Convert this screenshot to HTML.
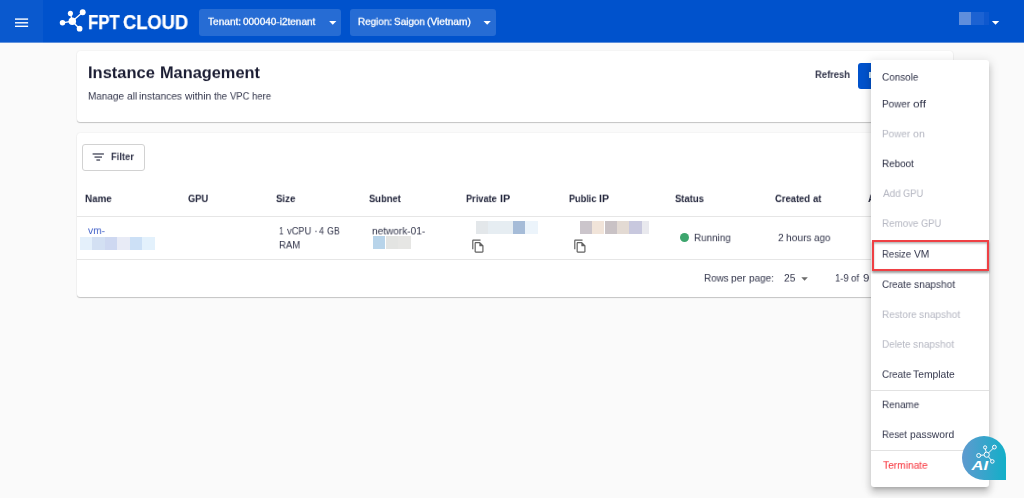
<!DOCTYPE html>
<html><head><meta charset="utf-8"><title>Instance Management</title>
<style>
*{box-sizing:border-box;margin:0;padding:0}
html,body{width:1024px;height:498px;overflow:hidden;background:#fafafa;font-family:"Liberation Sans", sans-serif}
.p{position:absolute}
.t{position:absolute;white-space:nowrap;line-height:1;transform-origin:0 0;will-change:transform}
.hdr{position:absolute;left:0;top:0;width:1024px;height:43px;background:linear-gradient(#0052cc 42px,#5d8fdc 42px)}
.ham{position:absolute;left:0;top:0;width:43px;height:43px;background:linear-gradient(#0a59ce 42px,#6394de 42px)}
.ham i{position:absolute;left:15px;width:13px;height:1.6px;background:#fff}
.sel{position:absolute;top:9.4px;height:26.6px;background:#266cd4;border-radius:3px}
.car{position:absolute;width:0;height:0;border-left:3.4px solid transparent;border-right:3.4px solid transparent;border-top:3.6px solid #fff}
.card{position:absolute;background:#fff;border-radius:3px;box-shadow:0 1px 1px rgba(0,0,0,.2),0 0 1.5px rgba(0,0,0,.1)}
.menu{position:absolute;left:871.4px;top:59.8px;width:117.2px;height:427px;background:#fff;border-radius:3px;box-shadow:0 3.6px 3.6px -2.2px rgba(0,0,0,.17),0 5.8px 7.3px .7px rgba(0,0,0,.12),0 2.2px 10px 1.5px rgba(0,0,0,.1)}
.ln{position:absolute;height:1px;background:#e6e6e6}
</style></head><body>
<div class="hdr">
<div class="ham"></div>
<svg class="p" style="left:0;top:0" width="43" height="43" viewBox="0 0 43 43"><g fill="#fff"><rect x="15" y="18.4" width="13.1" height="1.4"/><rect x="15" y="22.1" width="13.1" height="1.4"/><rect x="15" y="25.6" width="13.1" height="1.4"/></g></svg>
<svg class="p" style="left:56px;top:6px" width="36" height="30" viewBox="56 6 36 30">
<g stroke="#fff" stroke-width="1.3" stroke-linecap="round"><line x1="62.5" y1="22.8" x2="72.3" y2="21.2"/><line x1="72.3" y1="21.2" x2="70.4" y2="13.4"/><line x1="72.3" y1="21.2" x2="82.7" y2="12.3"/><line x1="72.3" y1="21.2" x2="79.6" y2="28.7"/></g>
<g fill="#fff"><circle cx="62.5" cy="22.8" r="2.75"/><circle cx="72.3" cy="21.2" r="3.75"/><circle cx="70.4" cy="13.4" r="2.55"/><circle cx="82.7" cy="12.3" r="2.95"/><circle cx="79.6" cy="28.7" r="2.85"/></g>
</svg>
<div class="sel" style="left:199px;width:142px"></div>
<div class="sel" style="left:350px;width:145.8px"></div>
<div class="p" style="left:958.6px;top:12px;width:12.3px;height:12.8px;background:#5f8edc"></div>
<div class="p" style="left:970.9px;top:12px;width:13.3px;height:12.8px;background:#1c62d2"></div>
<div class="p" style="left:984.2px;top:12px;width:4.5px;height:12.8px;background:#0e58ce"></div>

</div>
<div class="card" style="left:77px;top:51px;width:876px;height:70.6px"></div>
<div class="p" style="left:858px;top:62.6px;width:40px;height:26.3px;background:#0052cc;border-radius:3px"></div>
<div class="p" style="left:869.4px;top:71.6px;width:2px;height:6px;background:#cfe6f5"></div>
<div class="card" style="left:77px;top:133px;width:876px;height:164.2px"></div>
<div class="p" style="left:82.4px;top:144.2px;width:62.3px;height:26.5px;border:1px solid #d2d2d2;border-radius:3px"></div>
<svg class="p" style="left:90px;top:150px" width="16" height="14" viewBox="90 150 16 14"><g fill="#3c3f52"><rect x="92.6" y="153.35" width="11.3" height="1.25"/><rect x="94.5" y="156.45" width="7.5" height="1.25"/><rect x="96.4" y="159.4" width="3.7" height="1.25"/></g></svg>
<div class="ln" style="left:77px;top:216px;width:876px"></div>
<div class="ln" style="left:77px;top:259px;width:876px"></div>
<div class="p" style="left:79.8px;top:237.1px;width:12.50px;height:12.50px;background:#e4f0fb"></div>
<div class="p" style="left:92.3px;top:237.1px;width:12.30px;height:12.50px;background:#d3e0f3"></div>
<div class="p" style="left:104.6px;top:237.1px;width:12.60px;height:12.50px;background:#ced8f1"></div>
<div class="p" style="left:117.2px;top:237.1px;width:12.80px;height:12.50px;background:#e8ebf6"></div>
<div class="p" style="left:130px;top:237.1px;width:12.00px;height:12.50px;background:#cce0f6"></div>
<div class="p" style="left:142px;top:237.1px;width:13.00px;height:12.50px;background:#e3f1fc"></div>
<div class="p" style="left:373.1px;top:236.3px;width:12.40px;height:12.50px;background:#b8d4ea"></div>
<div class="p" style="left:385.5px;top:236.3px;width:12.70px;height:12.50px;background:#e3e4e2"></div>
<div class="p" style="left:398.2px;top:236.3px;width:12.80px;height:12.50px;background:#e6e6e4"></div>
<div class="p" style="left:476px;top:221.1px;width:12.30px;height:12.70px;background:#e3e7ea"></div>
<div class="p" style="left:488.3px;top:221.1px;width:24.80px;height:12.70px;background:#e6edf2"></div>
<div class="p" style="left:513.1px;top:221.1px;width:12.30px;height:12.70px;background:#a6bcd8"></div>
<div class="p" style="left:525.4px;top:221.1px;width:12.70px;height:12.70px;background:#ecf4fb"></div>
<div class="p" style="left:579.5px;top:221.1px;width:12.30px;height:12.70px;background:#cbc5cb"></div>
<div class="p" style="left:591.8px;top:221.1px;width:12.70px;height:12.70px;background:#f1e4d9"></div>
<div class="p" style="left:604.5px;top:221.1px;width:12.30px;height:12.70px;background:#c9c2c5"></div>
<div class="p" style="left:616.8px;top:221.1px;width:12.30px;height:12.70px;background:#e3dad3"></div>
<div class="p" style="left:629.1px;top:221.1px;width:12.50px;height:12.70px;background:#c8c8de"></div>
<div class="p" style="left:641.6px;top:221.1px;width:7.40px;height:12.70px;background:#e9e9ee"></div>
<svg class="p" style="left:471.2px;top:239.1px" width="14.3" height="14.3" viewBox="0 0 24 24"><path fill="#626262" d="M16 1H4c-1.1 0-2 .9-2 2v14h2V3h12V1zm-1 4H8c-1.1 0-1.99.9-1.99 2L6 21c0 1.1.89 2 1.99 2H19c1.1 0 2-.9 2-2V11l-6-6zM8 21V7h6v5h5v9H8z"/></svg>
<svg class="p" style="left:573.3px;top:239.1px" width="14.3" height="14.3" viewBox="0 0 24 24"><path fill="#626262" d="M16 1H4c-1.1 0-2 .9-2 2v14h2V3h12V1zm-1 4H8c-1.1 0-1.99.9-1.99 2L6 21c0 1.1.89 2 1.99 2H19c1.1 0 2-.9 2-2V11l-6-6zM8 21V7h6v5h5v9H8z"/></svg>
<div class="p" style="left:680px;top:233px;width:9.2px;height:9.2px;border-radius:50%;background:#3da56d"></div>

<svg class="p" style="left:0;top:0" width="1024" height="300" viewBox="0 0 1024 300"><g fill="#fff"><polygon points="329.1,20.9 336.4,20.9 332.75,24.8"/><polygon points="483.5,20.9 490.8,20.9 487.15,24.8"/><polygon points="991.9,20.9 999.2,20.9 995.55,24.8"/></g><polygon fill="#6b6b6b" points="801.3,277.2 807.8,277.2 804.55,280.7"/></svg>
<div><span class="t" style="left:88.44px;top:13.00px;font-size:19.6px;font-weight:bold;color:#fff;transform:translateY(0.00px) scale(0.8559,1.0000);-webkit-text-stroke:.25px #fff;">FPT</span> <span class="t" style="left:123.11px;top:13.00px;font-size:19.6px;font-weight:bold;color:#fff;transform:translateY(0.00px) scale(0.9360,1.0000);-webkit-text-stroke:.25px #fff;">CLOUD</span></div>
<div><span class="t" style="left:208.12px;top:17.00px;font-size:10.0px;color:#fff;transform:translateY(0.80px) scale(1.0086,0.9000);-webkit-text-stroke:.3px #fff;">Tenant:</span> <span class="t" style="left:243.15px;top:17.00px;font-size:10.0px;color:#fff;transform:translateY(0.80px) scale(0.9983,0.9000);-webkit-text-stroke:.3px #fff;">000040-i2tenant</span></div>
<div><span class="t" style="left:357.63px;top:17.00px;font-size:10.0px;color:#fff;transform:translateY(0.80px) scale(0.9857,0.9000);-webkit-text-stroke:.3px #fff;">Region:</span> <span class="t" style="left:393.55px;top:17.00px;font-size:10.0px;color:#fff;transform:translateY(0.80px) scale(0.9909,0.9000);-webkit-text-stroke:.3px #fff;">Saigon</span> <span class="t" style="left:426.69px;top:17.00px;font-size:10.0px;color:#fff;transform:translateY(0.80px) scale(1.0154,0.9000);-webkit-text-stroke:.3px #fff;">(Vietnam)</span></div>
<div><span class="t" style="left:87.56px;top:64.00px;font-size:16.2px;font-weight:bold;color:#1b1d33;transform:translateY(0.45px) scale(1.0172,0.9750);">Instance</span> <span class="t" style="left:159.56px;top:64.00px;font-size:16.2px;font-weight:bold;color:#1b1d33;transform:translateY(0.45px) scale(1.0100,0.9750);">Management</span></div>
<div><span class="t" style="left:88.05px;top:92.00px;font-size:10.3px;color:#2f3248;transform:translateY(0.10px) scale(0.9659,0.9313);">Manage</span> <span class="t" style="left:126.51px;top:92.00px;font-size:10.3px;color:#2f3248;transform:translateY(0.10px) scale(0.9808,0.9313);">all</span> <span class="t" style="left:139.16px;top:92.00px;font-size:10.3px;color:#2f3248;transform:translateY(0.10px) scale(0.9864,0.9313);">instances</span> <span class="t" style="left:184.90px;top:92.00px;font-size:10.3px;color:#2f3248;transform:translateY(0.10px) scale(0.9990,0.9313);">within</span> <span class="t" style="left:214.09px;top:92.00px;font-size:10.3px;color:#2f3248;transform:translateY(0.10px) scale(0.9091,0.9313);">the</span> <span class="t" style="left:229.89px;top:92.00px;font-size:10.3px;color:#2f3248;transform:translateY(0.10px) scale(0.9139,0.9313);">VPC</span> <span class="t" style="left:251.81px;top:92.00px;font-size:10.3px;color:#2f3248;transform:translateY(0.10px) scale(0.9187,0.9313);">here</span></div>
<div><span class="t" style="left:815.21px;top:70.00px;font-size:10.3px;font-weight:bold;color:#2f3248;transform:translateY(0.55px) scale(0.9135,0.9313);">Refresh</span></div>
<div><span class="t" style="left:110.52px;top:152.00px;font-size:10.3px;font-weight:bold;color:#2f3248;transform:translateY(0.65px) scale(0.9072,0.9313);">Filter</span></div>
<div><span class="t" style="left:84.99px;top:194.00px;font-size:10.3px;font-weight:bold;color:#23263c;transform:translateY(0.65px) scale(0.9526,0.9313);">Name</span></div>
<div><span class="t" style="left:187.96px;top:194.00px;font-size:10.3px;font-weight:bold;color:#23263c;transform:translateY(0.65px) scale(0.8988,0.9313);">GPU</span></div>
<div><span class="t" style="left:276.45px;top:194.00px;font-size:10.3px;font-weight:bold;color:#23263c;transform:translateY(0.65px) scale(0.9358,0.9313);">Size</span></div>
<div><span class="t" style="left:369.26px;top:194.00px;font-size:10.3px;font-weight:bold;color:#23263c;transform:translateY(0.65px) scale(0.9105,0.9313);">Subnet</span></div>
<div><span class="t" style="left:675.16px;top:194.00px;font-size:10.3px;font-weight:bold;color:#23263c;transform:translateY(0.65px) scale(0.9176,0.9313);">Status</span></div>
<div><span class="t" style="left:465.73px;top:194.00px;font-size:10.3px;font-weight:bold;color:#23263c;transform:translateY(0.65px) scale(0.8962,0.9313);">Private</span> <span class="t" style="left:499.51px;top:194.00px;font-size:10.3px;font-weight:bold;color:#23263c;transform:translateY(0.65px) scale(1.0551,0.9313);">IP</span></div>
<div><span class="t" style="left:568.74px;top:194.00px;font-size:10.3px;font-weight:bold;color:#23263c;transform:translateY(0.65px) scale(0.8840,0.9313);">Public</span> <span class="t" style="left:599.13px;top:194.00px;font-size:10.3px;font-weight:bold;color:#23263c;transform:translateY(0.65px) scale(1.0319,0.9313);">IP</span></div>
<div><span class="t" style="left:775.26px;top:194.00px;font-size:10.3px;font-weight:bold;color:#23263c;transform:translateY(0.65px) scale(0.9128,0.9313);">Created</span> <span class="t" style="left:813.17px;top:194.00px;font-size:10.3px;font-weight:bold;color:#23263c;transform:translateY(0.65px) scale(0.9143,0.9313);">at</span></div>
<div><span class="t" style="left:88.28px;top:226.00px;font-size:10.3px;color:#4060c8;transform:translateY(0.55px) scale(0.9865,0.9313);">vm-</span></div>
<div><span class="t" style="left:279.45px;top:226.00px;font-size:10.3px;color:#2f3248;transform:translateY(0.95px) scale(0.8000,0.9313);">1</span> <span class="t" style="left:287.19px;top:226.00px;font-size:10.3px;color:#2f3248;transform:translateY(0.95px) scale(0.9000,0.9313);">vCPU</span> <span class="t" style="left:313.54px;top:226.00px;font-size:10.3px;color:#2f3248;transform:translateY(0.95px) scale(1.1500,0.9313);">·</span> <span class="t" style="left:319.09px;top:226.00px;font-size:10.3px;color:#2f3248;transform:translateY(0.95px) scale(0.8585,0.9313);">4</span> <span class="t" style="left:327.17px;top:226.00px;font-size:10.3px;color:#2f3248;transform:translateY(0.95px) scale(0.8649,0.9313);">GB</span></div>
<div><span class="t" style="left:279.44px;top:240.00px;font-size:10.3px;color:#2f3248;transform:translateY(0.95px) scale(0.9302,0.9313);">RAM</span></div>
<div><span class="t" style="left:371.67px;top:226.00px;font-size:10.3px;color:#2f3248;transform:translateY(0.95px) scale(0.9769,0.9313);">network-01-</span></div>
<div><span class="t" style="left:693.96px;top:233.00px;font-size:10.3px;color:#2f3248;transform:translateY(0.75px) scale(0.9551,0.9313);">Running</span></div>
<div><span class="t" style="left:777.91px;top:233.00px;font-size:10.3px;color:#2f3248;transform:translateY(0.75px) scale(0.9895,0.9313);">2</span> <span class="t" style="left:786.06px;top:233.00px;font-size:10.3px;color:#2f3248;transform:translateY(0.75px) scale(0.9909,0.9313);">hours</span> <span class="t" style="left:814.02px;top:233.00px;font-size:10.3px;color:#2f3248;transform:translateY(0.75px) scale(0.9538,0.9313);">ago</span></div>
<div><span class="t" style="left:704.46px;top:274.00px;font-size:10.3px;color:#2f3248;transform:translateY(0.05px) scale(0.9571,0.9313);">Rows</span> <span class="t" style="left:731.38px;top:274.00px;font-size:10.3px;color:#2f3248;transform:translateY(0.05px) scale(0.9982,0.9313);">per</span> <span class="t" style="left:748.50px;top:274.00px;font-size:10.3px;color:#2f3248;transform:translateY(0.05px) scale(0.9649,0.9313);">page:</span></div>
<div><span class="t" style="left:784.20px;top:274.00px;font-size:10.3px;color:#2f3248;transform:translateY(0.05px) scale(0.9905,0.9313);">25</span></div>
<div><span class="t" style="left:835.22px;top:274.00px;font-size:10.3px;color:#2f3248;transform:translateY(0.05px) scale(0.9101,0.9313);">1-9</span> <span class="t" style="left:850.95px;top:274.00px;font-size:10.3px;color:#2f3248;transform:translateY(0.05px) scale(0.9333,0.9313);">of</span> <span class="t" style="left:863.04px;top:274.00px;font-size:10.3px;color:#2f3248;transform:translateY(0.05px) scale(1.1158,0.9313);">9</span></div>
<div class="t" style="left:868.2px;top:194px;font-size:10.3px;font-weight:bold;color:#23263c;transform:translateY(.55px) scale(.9,.93)">A</div>
<div class="menu"></div>
<div class="ln" style="left:871.4px;top:390px;width:117.2px;background:#e2e2e2"></div>
<div class="ln" style="left:871.4px;top:450px;width:117.2px;background:#e2e2e2"></div>
<div><span class="t" style="left:882.32px;top:73.00px;font-size:10.3px;color:#2f3248;transform:translateY(0.15px) scale(0.9627,0.9313);">Console</span></div>
<div><span class="t" style="left:881.95px;top:99.00px;font-size:10.3px;color:#2f3248;transform:translateY(0.95px) scale(0.9671,0.9313);">Power</span> <span class="t" style="left:912.57px;top:99.00px;font-size:10.3px;color:#2f3248;transform:translateY(0.95px) scale(1.1494,0.9313);">off</span></div>
<div><span class="t" style="left:881.95px;top:129.00px;font-size:10.3px;color:#b4b6c1;transform:translateY(0.85px) scale(0.9671,0.9313);">Power</span> <span class="t" style="left:912.61px;top:129.00px;font-size:10.3px;color:#b4b6c1;transform:translateY(0.85px) scale(1.0313,0.9313);">on</span></div>
<div><span class="t" style="left:881.96px;top:159.00px;font-size:10.3px;color:#24273d;transform:translateY(0.65px) scale(0.9581,0.9313);">Reboot</span></div>
<div><span class="t" style="left:882.80px;top:189.00px;font-size:10.3px;color:#b4b6c1;transform:translateY(0.45px) scale(0.9702,0.9313);">Add</span> <span class="t" style="left:902.65px;top:189.00px;font-size:10.3px;color:#b4b6c1;transform:translateY(0.45px) scale(0.9000,0.9313);">GPU</span></div>
<div><span class="t" style="left:881.97px;top:219.00px;font-size:10.3px;color:#b4b6c1;transform:translateY(0.35px) scale(0.9514,0.9313);">Remove</span> <span class="t" style="left:920.75px;top:219.00px;font-size:10.3px;color:#b4b6c1;transform:translateY(0.35px) scale(0.9000,0.9313);">GPU</span></div>
<div><span class="t" style="left:882.19px;top:250.00px;font-size:10.3px;color:#2f3248;transform:translateY(0.05px) scale(0.9228,0.9313);">Resize</span> <span class="t" style="left:913.88px;top:250.00px;font-size:10.3px;color:#2f3248;transform:translateY(0.05px) scale(0.9931,0.9313);">VM</span></div>
<div><span class="t" style="left:882.33px;top:280.00px;font-size:10.3px;color:#2f3248;transform:translateY(0.45px) scale(0.9450,0.9313);">Create</span> <span class="t" style="left:913.83px;top:280.00px;font-size:10.3px;color:#2f3248;transform:translateY(0.45px) scale(0.9825,0.9313);">snapshot</span></div>
<div><span class="t" style="left:881.96px;top:310.00px;font-size:10.3px;color:#b4b6c1;transform:translateY(0.55px) scale(0.9612,0.9313);">Restore</span> <span class="t" style="left:918.83px;top:310.00px;font-size:10.3px;color:#b4b6c1;transform:translateY(0.55px) scale(0.9837,0.9313);">snapshot</span></div>
<div><span class="t" style="left:881.96px;top:340.00px;font-size:10.3px;color:#b4b6c1;transform:translateY(0.25px) scale(0.9568,0.9313);">Delete</span> <span class="t" style="left:912.83px;top:340.00px;font-size:10.3px;color:#b4b6c1;transform:translateY(0.25px) scale(0.9825,0.9313);">snapshot</span></div>
<div><span class="t" style="left:882.33px;top:370.00px;font-size:10.3px;color:#2f3248;transform:translateY(0.35px) scale(0.9450,0.9313);">Create</span> <span class="t" style="left:913.45px;top:370.00px;font-size:10.3px;color:#2f3248;transform:translateY(0.35px) scale(1.0006,0.9313);">Template</span></div>
<div><span class="t" style="left:881.97px;top:400.00px;font-size:10.3px;color:#2f3248;transform:translateY(0.65px) scale(0.9542,0.9313);">Rename</span></div>
<div><span class="t" style="left:881.99px;top:430.00px;font-size:10.3px;color:#2f3248;transform:translateY(0.55px) scale(0.9269,0.9313);">Reset</span> <span class="t" style="left:909.52px;top:430.00px;font-size:10.3px;color:#2f3248;transform:translateY(0.55px) scale(1.0047,0.9313);">password</span></div>
<div><span class="t" style="left:882.95px;top:461.00px;font-size:10.3px;color:#f72c35;transform:translateY(0.25px) scale(0.9876,0.9313);">Terminate</span></div>
<div class="p" style="left:872px;top:240px;width:117px;height:30.8px;border:2px solid #ef4044;box-shadow:0 1.5px 2px rgba(0,0,0,.38),inset 0 1.5px 2px rgba(0,0,0,.3)"></div>
<div class="p" style="left:962.3px;top:436px;width:44px;height:44px;border-radius:50% 50% 0 50%;background:linear-gradient(90deg,#5f9acf,#12afc8)"></div>
<svg class="p" style="left:962px;top:436px" width="46" height="46" viewBox="962 436 46 46">
<g stroke="#fff" stroke-width="1" fill="none"><line x1="986.7" y1="454.7" x2="985.1" y2="447.4"/><line x1="986.7" y1="454.7" x2="994.4" y2="447.1"/><line x1="986.7" y1="454.7" x2="978.7" y2="455.5"/><line x1="986.7" y1="454.7" x2="992.3" y2="461.4"/></g>
<g stroke="#fff" stroke-width="1" fill="#3fa4cc"><circle cx="986.7" cy="454.7" r="2.6"/><circle cx="985.1" cy="447.4" r="1.6"/><circle cx="994.4" cy="447.1" r="1.9"/><circle cx="978.7" cy="455.5" r="2"/><circle cx="992.3" cy="461.4" r="1.8"/></g>
<text x="971.6" y="469.6" font-family="Liberation Sans, sans-serif" font-size="12.4" font-weight="bold" font-style="italic" fill="#fff" textLength="16.6" lengthAdjust="spacingAndGlyphs">AI</text>
</svg>
</body></html>
